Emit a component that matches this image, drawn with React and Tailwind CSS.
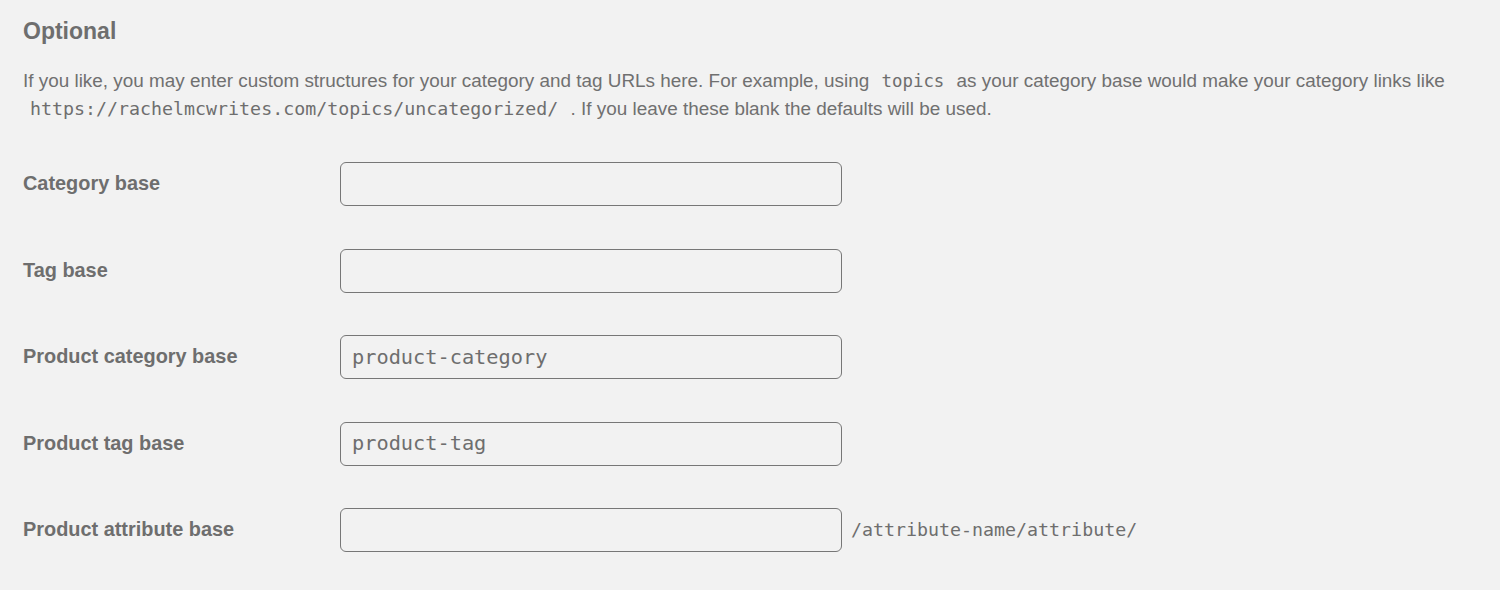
export default function App() {
  const sans = { fontFamily: '"Liberation Sans", Arial, sans-serif' };
  const rows = [
    { label: "Category base", value: "" },
    { label: "Tag base", value: "" },
    { label: "Product category base", value: "product-category" },
    { label: "Product tag base", value: "product-tag" },
    { label: "Product attribute base", value: "", suffix: "/attribute-name/attribute/" },
  ];
  return (
    <div className="w-[1500px] h-[590px] bg-[#f2f2f2] text-[#707070] overflow-hidden" style={sans}>
      <div className="pl-[23px] pr-[20px] pt-[17px]">
        <h2 className="text-[23px] font-bold leading-[28px] text-[#6e6e6e]">Optional</h2>
        <p className="mt-[22px] text-[18.9px] leading-[27px] text-[#707070]">
          If you like, you may enter custom structures for your category and tag URLs here. For example, using{" "}
          <code className="px-[7px] font-['DejaVu_Sans_Mono',monospace] text-[17.4px] text-[#6e6e6e]">topics</code>{" "}
          as your category base would make your category links like{" "}
          <code className="px-[7px] font-['DejaVu_Sans_Mono',monospace] text-[18.3px] text-[#6e6e6e]">
            https://rachelmcwrites.com/topics/uncategorized/
          </code>{" "}
          . If you leave these blank the defaults will be used.
        </p>
        <div className="mt-[40px] flex flex-col gap-[42.5px]">
          {rows.map((r) => (
            <div key={r.label} className="flex items-center h-[44px]">
              <div className="w-[317px] text-[19.9px] font-bold text-[#6e6e6e]">{r.label}</div>
              <div className="w-[502px] h-[44px] border border-[#777777] rounded-[6px] flex items-center px-[11px] font-['DejaVu_Sans_Mono',monospace] text-[20.3px] text-[#6e6e6e]">
                {r.value}
              </div>
              {r.suffix && (
                <span className="ml-[9px] font-['DejaVu_Sans_Mono',monospace] text-[18.3px] text-[#6e6e6e]">
                  {r.suffix}
                </span>
              )}
            </div>
          ))}
        </div>
      </div>
    </div>
  );
}
